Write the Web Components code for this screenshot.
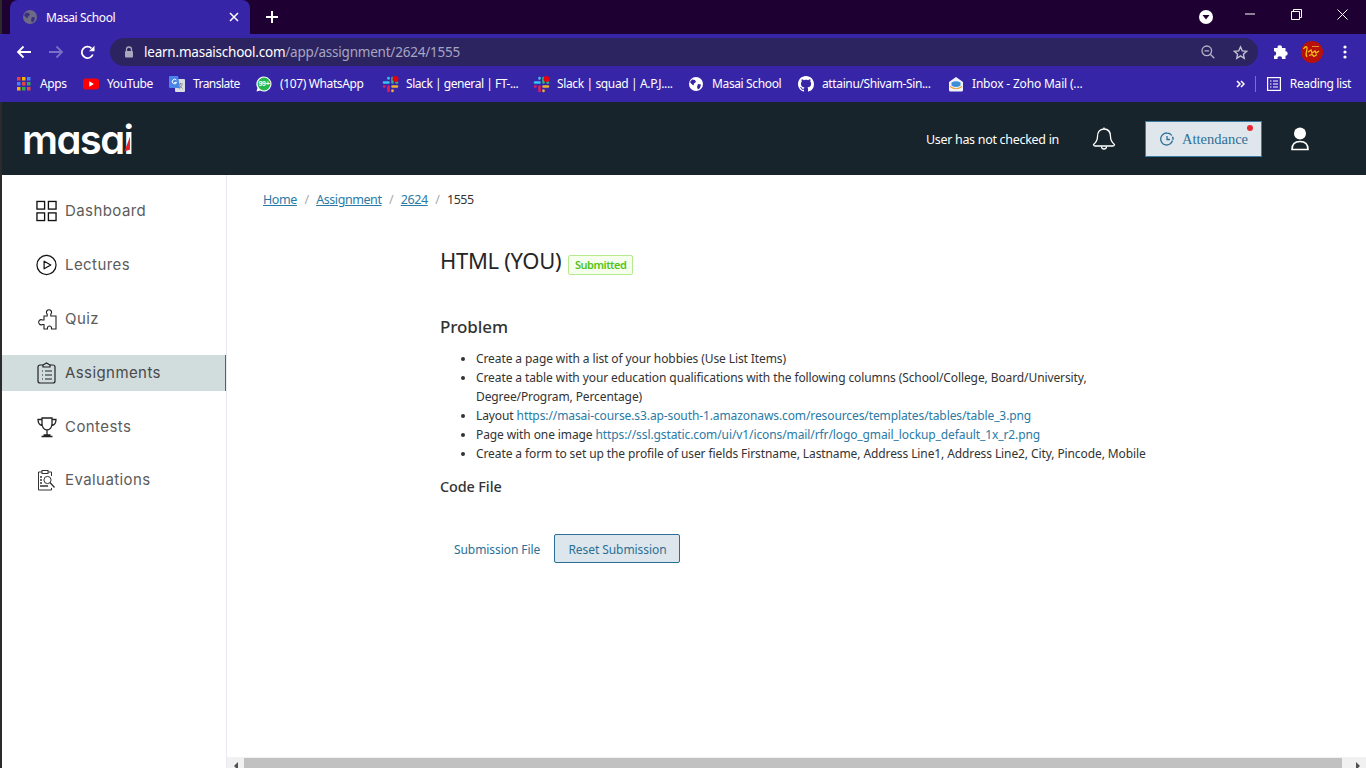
<!DOCTYPE html>
<html>
<head>
<meta charset="utf-8">
<title>Masai School</title>
<style>
  html, body { margin: 0; height: 100%; overflow: hidden; background: #fff; }
  body { font-family: "Noto Sans", "Open Sans", sans-serif; }
</style>
</head>
<body>
<browser-chrome></browser-chrome>
<app-page>
  <masai-header slot="top"></masai-header>
  <side-nav slot="side"></side-nav>
  <crumb-bar slot="main"></crumb-bar>
  <assignment-view slot="main"></assignment-view>
  <page-scrollbar slot="bottom"></page-scrollbar>
</app-page>

<script>
const UI_FONT = `"Noto Sans", "Open Sans", sans-serif`;

class BrowserChrome extends HTMLElement {
  constructor() {
    super();
    this.attachShadow({ mode: "open" });
    this.shadowRoot.innerHTML = `
      <style>
        :host { display: block; height: 102px; background: #3725a8; color: #fff; font-family: ${UI_FONT}; font-size: 12px; letter-spacing: -.37px; }
        svg { display: block; flex: none; }
        .strip { height: 34px; background: #1f0033; display: flex; align-items: stretch; border-left: 2px solid #2b2b2b; box-sizing: border-box; padding-left: 8px; }
        .tab { width: 240px; background: #3725a8; border-radius: 8px 8px 0 0; display: flex; align-items: center; padding: 0 11px 0 13px; box-sizing: border-box; }
        .tab .title { margin-left: 9px; flex: 1; }
        .newtab { margin-left: 16px; align-self: center; }
        .spacer { flex: 1; }
        .winctl { display: flex; align-items: center; }
        .bar { height: 32px; display: flex; align-items: flex-end; padding-left: 16px; box-sizing: border-box; }
        .nav { display: flex; width: 94px; height: 28px; align-items: center; gap: 16px; }
        .omni { width: 1148px; height: 28px; border-radius: 14px; background: #2c2461; display: flex; align-items: center; padding: 0 10px 0 14px; box-sizing: border-box; font-size: 13.500px; }
        .url { margin-left: 10px; flex: 1; letter-spacing: -.22px; white-space: nowrap; }
        .url span { color: #a8a5c2; }
        .omni-icons { display: flex; gap: 18px; align-items: center; }
        .tools { display: flex; height: 28px; align-items: center; margin-left: 15px; }
        .bookmarks { height: 36px; display: flex; align-items: center; padding-left: 16px; }
        .end { margin-left: auto; display: flex; align-items: center; padding-right: 15px; }
        .sep { width: 1px; height: 16px; background: #7b70c4; margin: 0 11px 0 10px; }
        .reading { margin-left: 9px; padding-bottom: 1px; }
      </style>
      <div class="strip">
        <div class="tab">
          <svg width="14" height="14" viewBox="0 0 14 14"><circle cx="7" cy="7" r="7" fill="#6d6a86"/><path d="M3 2.500l3 .5 1 2-2 1.500-.5 2-2-1.500-1.500-2zM9 7l3 .5-1 3.500-2 1.500-1-2.500z" fill="#3a3180"/></svg>
          <span class="title">Masai School</span>
          <svg width="10" height="10" viewBox="0 0 10 10"><path d="M1 1l8 8M9 1l-8 8" stroke="#fff" stroke-width="1.500"/></svg>
        </div>
        <svg class="newtab" width="12" height="12" viewBox="0 0 12 12"><path d="M6 0v12M0 6h12" stroke="#fff" stroke-width="2"/></svg>
        <div class="spacer"></div>
        <div class="winctl">
          <svg width="14" height="14" viewBox="0 0 14 14" style="margin-right:32px"><circle cx="7" cy="7" r="7" fill="#fff"/><path d="M3.500 5h7L7 9.500z" fill="#1f0033"/></svg>
          <svg width="10" height="2" viewBox="0 0 10 2" style="margin:-6px 36px 0 0"><path d="M0 1h10" stroke="#fff"/></svg>
          <svg width="11" height="11" viewBox="0 0 11 11" style="margin:-6px 35px 0 0"><path d="M.5 2.500h8v8h-8zM2.500 2.500v-2h8v8h-2" fill="none" stroke="#fff"/></svg>
          <svg width="11" height="11" viewBox="0 0 11 11" style="margin:-6px 18px 0 0"><path d="M.5.500l10 10M10.500.500l-10 10" stroke="#fff"/></svg>
        </div>
      </div>
      <div class="bar">
        <div class="nav">
          <svg width="16" height="14" viewBox="0 0 16 14"><path d="M15 7H2M7.500 1.500L2 7l5.500 5.500" fill="none" stroke="#fff" stroke-width="1.800"/></svg>
          <svg width="16" height="14" viewBox="0 0 16 14"><path d="M1 7h13M8.500 1.500L14 7l-5.500 5.500" fill="none" stroke="#7a6fc6" stroke-width="1.800"/></svg>
          <svg width="15" height="15" viewBox="0 0 15 15"><path d="M12.800 9.500A5.700 5.700 0 1 1 11.500 3.300" fill="none" stroke="#fff" stroke-width="1.800"/><path d="M9 6.200h5.500V.700z" fill="#fff"/></svg>
        </div>
        <div class="omni">
          <svg width="10" height="12" viewBox="0 0 10 12"><path d="M2.500 5V3.500a2.500 2.500 0 0 1 5 0V5" fill="none" stroke="#aaa8bc" stroke-width="1.300"/><rect x="1" y="5" width="8" height="6.500" rx="1" fill="#aaa8bc"/></svg>
          <div class="url">learn.masaischool.com<span>/app/assignment/2624/1555</span></div>
          <div class="omni-icons">
            <svg width="14" height="14" viewBox="0 0 14 14"><circle cx="5.800" cy="5.800" r="4.800" fill="none" stroke="#b3b1c4" stroke-width="1.300"/><path d="M3.500 5.800h4.600M9.300 9.300l4 4" stroke="#b3b1c4" stroke-width="1.300"/></svg>
            <svg width="15" height="15" viewBox="0 0 16 15"><path d="M8 1.500l1.900 4.200 4.600.5-3.400 3.100.9 4.500L8 11.100l-4 2.700.9-4.500L1.500 6.200l4.600-.5z" fill="none" stroke="#c4c2d2" stroke-width="1.400"/></svg>
          </div>
        </div>
        <div class="tools">
          <svg width="16" height="16" viewBox="0 0 16 16" style="margin-right:12px"><path d="M1 4h3.600a2.200 2.200 0 1 1 4.300 0h3.600v3.300a2.200 2.200 0 1 1 0 4.400V15H8.900a2.200 2.200 0 1 0-4.300 0H1v-3.300a2.200 2.200 0 1 0 0-4.400z" fill="#fff"/></svg>
          <svg width="22" height="22" viewBox="0 0 22 22" style="margin-right:20px"><circle cx="11" cy="11" r="11" fill="#b8100a"/><path d="M2.500 8c1.500-3 4-3 3.500 0s-2 5 0 8M7 11l3-2 1 3 3-2 1 2 3-2M8 14.500l3-1 2 2 3-2" fill="none" stroke="#f2c21a" stroke-width="1.300"/><path d="M11 5.500h7" stroke="#e88a30"/></svg>
          <svg width="4" height="14" viewBox="0 0 4 14"><circle cx="2" cy="2" r="1.600" fill="#fff"/><circle cx="2" cy="7" r="1.600" fill="#fff"/><circle cx="2" cy="12" r="1.600" fill="#fff"/></svg>
        </div>
      </div>
      <div class="bookmarks">
        <bookmark-item label="Apps" width="67"><svg width="14" height="14" viewBox="0 0 14 14"><rect x="0" y="0" width="3.500" height="3.500" fill="#e8453c"/><rect x="5" y="0" width="3.500" height="3.500" fill="#f4b400"/><rect x="10" y="0" width="3.500" height="3.500" fill="#4285f4"/><rect x="0" y="5" width="3.500" height="3.500" fill="#4285f4"/><rect x="5" y="5" width="3.500" height="3.500" fill="#e8453c"/><rect x="10" y="5" width="3.500" height="3.500" fill="#34a853"/><rect x="0" y="10" width="3.500" height="3.500" fill="#f4b400"/><rect x="5" y="10" width="3.500" height="3.500" fill="#34a853"/><rect x="10" y="10" width="3.500" height="3.500" fill="#e8453c"/></svg></bookmark-item>
        <bookmark-item label="YouTube" width="86"><svg width="16" height="12" viewBox="0 0 16 12"><rect width="16" height="11" y=".5" rx="3" fill="#f00"/><path d="M6.300 3.200l4.500 2.800-4.500 2.800z" fill="#fff"/></svg></bookmark-item>
        <bookmark-item label="Translate" width="87" style="letter-spacing:-.55px"><svg width="16" height="16" viewBox="0 0 16 16"><rect x="6" y="3" width="10" height="13" rx="1" fill="#d9dce3"/><path d="M9 8h5M11.500 7v1.500M10 13l3-4M10.500 9.500l3 3" stroke="#7a7f8c" stroke-width=".8" fill="none"/><path d="M1 0h8l2 12H1a1 1 0 0 1-1-1V1a1 1 0 0 1 1-1z" fill="#4a86e8"/><path d="M7.300 4a2.300 2.300 0 1 0 .4 2.500H5.300" fill="none" stroke="#fff" stroke-width="1"/></svg></bookmark-item>
        <bookmark-item label="(107) WhatsApp" width="126"><svg width="16" height="16" viewBox="0 0 16 16"><path d="M8 .500a7.500 7.500 0 1 1-3.800 14L.5 15.500l1-3.600A7.500 7.500 0 0 1 8 .500z" fill="#fff"/><circle cx="8" cy="8" r="6.400" fill="#25b84c"/><text x="8" y="10.300" font-size="7" font-weight="700" letter-spacing="-.3" fill="#fff" text-anchor="middle" font-family="Liberation Sans, sans-serif">99+</text></svg></bookmark-item>
        <bookmark-item label="Slack | general | FT-..." width="151" style="letter-spacing:-.45px"><slack-mark></slack-mark></bookmark-item>
        <bookmark-item label="Slack | squad | A.P.J...." width="155"><slack-mark></slack-mark></bookmark-item>
        <bookmark-item label="Masai School" width="110"><svg width="14" height="14" viewBox="0 0 14 14"><circle cx="7" cy="7" r="7" fill="#fff"/><path d="M3 2.500l3 .5 1 2-2 1.500-.5 2-2-1.500-1.500-2zM9 7l3 .5-1 3.500-2 1.500-1-2.500z" fill="#3725a8"/></svg></bookmark-item>
        <bookmark-item label="attainu/Shivam-Sin..." width="150"><svg width="16" height="16" viewBox="0 0 16 16"><path fill="#fff" d="M8 0C3.580 0 0 3.580 0 8c0 3.540 2.290 6.530 5.470 7.590.4.070.55-.17.55-.38 0-.19-.01-.82-.01-1.490-2.010.37-2.530-.49-2.690-.94-.09-.23-.48-.94-.82-1.130-.28-.15-.68-.52-.01-.53.630-.01 1.080.58 1.230.82.720 1.210 1.870.87 2.330.66.070-.52.280-.87.510-1.070-1.780-.2-3.640-.89-3.640-3.950 0-.87.310-1.590.820-2.150-.080-.2-.360-1.020.080-2.120 0 0 .670-.21 2.200.82.640-.18 1.320-.27 2-.27s1.360.09 2 .27c1.530-1.040 2.200-.82 2.200-.82.440 1.100.160 1.920.080 2.120.51.560.820 1.270.820 2.150 0 3.070-1.870 3.750-3.650 3.950.290.250.540.730.540 1.480 0 1.070-.010 1.930-.010 2.200 0 .210.150.460.550.380A8.010 8.010 0 0 0 16 8c0-4.420-3.580-8-8-8z"/></svg></bookmark-item>
        <bookmark-item label="Inbox - Zoho Mail (..." width="130" style="letter-spacing:-.18px"><svg width="16" height="16" viewBox="0 0 16 16"><path d="M8 1l7 5v8a1.500 1.500 0 0 1-1.500 1.500h-11A1.500 1.500 0 0 1 1 14V6z" fill="#f2f2fa"/><path d="M3.500 6.500c3-1.800 6-1.800 9 0v3c-3 2-6 2-9 0z" fill="#3f8fd8"/><path d="M2 10.500c4 3 8 3 12 0" fill="none" stroke="#e9a33c" stroke-width="1.200"/></svg></bookmark-item>
        <div class="end">
          <svg width="9" height="8" viewBox="0 0 9 8"><path d="M1 1l3 3-3 3M5 1l3 3-3 3" fill="none" stroke="#fff" stroke-width="1.500"/></svg>
          <div class="sep"></div>
          <svg width="14" height="14" viewBox="0 0 14 14"><rect x=".6" y=".6" width="12.800" height="12.800" fill="none" stroke="#fff" stroke-width="1.200"/><path d="M3 4h1.500M6 4h5M3 7h1.500M6 7h5M3 10h1.500M6 10h5" stroke="#fff" stroke-width="1.200"/></svg>
          <span class="reading">Reading list</span>
        </div>
      </div>
    `;
  }
}

class BookmarkItem extends HTMLElement {
  static get observedAttributes() { return ["label", "width"]; }

  constructor() {
    super();
    this.attachShadow({ mode: "open" });
    this.shadowRoot.innerHTML = `
      <style>
        :host { display: flex; align-items: center; box-sizing: border-box; flex: none; white-space: nowrap; }
        .icon { width: 16px; display: flex; justify-content: center; margin-right: 8px; }
        .label { padding-bottom: 1px; }
      </style>
      <div class="icon"><slot></slot></div>
      <span class="label"></span>
    `;
  }

  attributeChangedCallback() {
    this.shadowRoot.querySelector(".label").textContent = this.getAttribute("label") || "";
    this.style.width = (this.getAttribute("width") || 100) + "px";
  }
}

class SlackMark extends HTMLElement {
  constructor() {
    super();
    this.attachShadow({ mode: "open" });
    this.shadowRoot.innerHTML = `
      <style>:host { display: block; width: 17px; height: 17px; } svg { display: block; }</style>
      <svg width="17" height="17" viewBox="0 0 17 17" fill="none" stroke-width="2.600" stroke-linecap="round">
        <path d="M2 6.500h4.500M6.500 2v.5" stroke="#36c5f0"/>
        <path d="M6.500 10.500v4.500M2 10.500h.5" stroke="#e01e5a"/>
        <path d="M10.500 10.500h4.500M10.500 15v-.5" stroke="#ecb22e"/>
        <path d="M10.500 2v4.500M15 6.500h-.5" stroke="#2eb67d"/>
        <circle cx="13.500" cy="3" r="3" fill="#e3000f" stroke="none"/>
      </svg>`;
  }
}

class AppPage extends HTMLElement {
  constructor() {
    super();
    this.attachShadow({ mode: "open" });
    this.shadowRoot.innerHTML = `
      <style>
        :host { display: grid; grid-template-columns: 2px 225px 1fr; grid-template-rows: 73px 1fr 11px; height: 666px; }
        .edge { grid-row: 1 / 4; background: #2b2b2b; }
        ::slotted([slot=top]) { grid-column: 2 / 4; }
        .side { border-right: 1px solid #e8eaf4; grid-row: 2 / 4; }
        .main { min-width: 0; overflow: hidden; }
      </style>
      <div class="edge"></div>
      <slot name="top"></slot>
      <div class="side"><slot name="side"></slot></div>
      <div class="main"><slot name="main"></slot></div>
      <slot name="bottom"></slot>
    `;
  }
}

class MasaiHeader extends HTMLElement {
  constructor() {
    super();
    this.attachShadow({ mode: "open" });
    this.shadowRoot.innerHTML = `
      <style>
        :host { display: flex; align-items: center; background: #18242b; color: #fff; font-family: ${UI_FONT}; }
        svg { display: block; flex: none; }
        .logo { position: relative; margin-left: 20px; font-family: Inter, sans-serif; font-feature-settings: "cv11"; font-weight: 600; font-size: 40px; letter-spacing: -1.600px; line-height: 1; margin-top: 2px; }
        .slash { position: absolute; right: 2px; bottom: 8px; width: 6px; height: 16px; background: #e8202a; clip-path: polygon(100% 0, 100% 88%, 0 100%); }
        .status { margin-left: auto; font-size: 12.500px; letter-spacing: -.3px; padding-top: 2px; }
        .bell { margin-left: 33px; }
        .attend { position: relative; margin-left: 29px; width: 117px; height: 36px; box-sizing: border-box; background: #dfe7ed; border: 1px solid #3a7ca5; color: #2f6f96; display: flex; align-items: center; padding-left: 14px; gap: 8px; font-family: "Liberation Serif", serif; font-size: 14.500px; }
        .attend span:first-of-type { padding-top: 2px; }
        .dot { position: absolute; top: 3px; right: 8px; width: 6px; height: 6px; border-radius: 50%; background: #e8282e; }
        .user { margin: 0 57px 0 29px; }
      </style>
      <div class="logo">masai<span class="slash"></span></div>
      <span class="status">User has not checked in</span>
      <svg class="bell" width="24" height="25" viewBox="0 0 24 25" fill="none" stroke="#fff" stroke-width="1.300"><path d="M12 3c-4.500 0-6.500 3.500-6.500 7.500 0 4-1.500 6-4 8 0 1 .5 1.500 1.500 1.500h18c1 0 1.500-.5 1.500-1.500-2.500-2-4-4-4-8C18.500 6.500 16.500 3 12 3z"/><path d="M12 3V1.500M9.500 20.500a2.500 2.500 0 0 0 5 0"/></svg>
      <div class="attend">
        <svg width="14" height="14" viewBox="0 0 14 14" fill="none" stroke="#2f6f96" stroke-width="1.300"><path d="M12.500 8.500A6 6 0 1 1 7 1c2 0 3.800 1 4.800 2.500"/><path d="M7 4v3.500h3M12 5.500h1.500M12.300 7h1.500"/></svg>
        <span>Attendance</span>
        <span class="dot"></span>
      </div>
      <svg class="user" width="18" height="24" viewBox="0 0 18 24"><circle cx="9" cy="6.500" r="6" fill="#fff"/><path d="M1 22.500c0-5 3-8 8-8s8 3 8 8z" fill="none" stroke="#fff" stroke-width="1.600"/></svg>
    `;
  }
}

class NavItem extends HTMLElement {
  static get observedAttributes() { return ["label"]; }

  constructor() {
    super();
    this.attachShadow({ mode: "open" });
    this.shadowRoot.innerHTML = `
      <style>
        :host { display: flex; align-items: center; height: 36px; padding-left: 34px; box-sizing: border-box; color: #5c5c5c; font-family: Inter, sans-serif; font-size: 15px; letter-spacing: .42px; }
        :host([active]) { background: #d1dcdd; border-right: 1px solid #2a6e9e; color: #4a4a4a; }
        .icon { width: 21px; height: 22px; margin-right: 8px; flex: none; display: flex; align-items: center; justify-content: center; }
        .label { padding-bottom: 2px; }
      </style>
      <div class="icon"><slot></slot></div>
      <span class="label"></span>
    `;
  }

  attributeChangedCallback() {
    this.shadowRoot.querySelector(".label").textContent = this.getAttribute("label") || "";
  }
}

class SideNav extends HTMLElement {
  constructor() {
    super();
    this.attachShadow({ mode: "open" });
    this.shadowRoot.innerHTML = `
      <style>
        :host { display: flex; flex-direction: column; gap: 18px; padding-top: 18px; }
        nav-item:last-child { margin-top: -1px; }
      </style>
      <nav-item label="Dashboard"><svg width="22" height="22" viewBox="0 0 22 22" fill="none" stroke="#111" stroke-width="1.400"><rect x="1" y="1" width="8" height="8"/><rect x="13" y="1" width="8" height="8"/><rect x="1" y="13" width="8" height="8"/><rect x="13" y="13" width="8" height="8"/></svg></nav-item>
      <nav-item label="Lectures"><svg width="22" height="22" viewBox="0 0 22 22" fill="none" stroke="#111" stroke-width="1.300"><circle cx="11" cy="11" r="10"/><path d="M8.500 7l7 4-7 4z" stroke-linejoin="round"/></svg></nav-item>
      <nav-item label="Quiz"><svg width="20" height="21" viewBox="0 0 20 21" fill="none" stroke="#222" stroke-width="1.100"><path d="M7 7h3.200V5.200a2.600 2.600 0 1 1 3.600 0V7H19v13h-4.500v-1a2 2 0 0 0-4 0v1H7v-4.500H5.500a2.600 2.600 0 1 1 0-4.500H7z"/></svg></nav-item>
      <nav-item label="Assignments" active><svg width="19" height="22" viewBox="0 0 19 22" fill="none" stroke="#222" stroke-width="1.200"><path d="M6 3H3a2 2 0 0 0-2 2v14a2 2 0 0 0 2 2h13a2 2 0 0 0 2-2V5a2 2 0 0 0-2-2h-3"/><path d="M6 5V3l3.500-2L13 3v2z"/><path d="M5 9h1M8 9h7M5 13h1M8 13h7M5 17h1M8 17h7"/></svg></nav-item>
      <nav-item label="Contests"><svg width="20" height="21" viewBox="0 0 20 21" fill="none" stroke="#222" stroke-width="1.300"><path d="M5 1h10v6c0 3-2 6-5 6S5 10 5 7zM5 2.500H1c0 4 1.500 5.500 4.300 6M15 2.500h4c0 4-1.500 5.500-4.300 6M10 13v5M4.500 19.500h11M6.500 18h7"/></svg></nav-item>
      <nav-item label="Evaluations"><svg width="19" height="22" viewBox="0 0 19 22" fill="none" stroke="#333" stroke-width="1"><path d="M5 3H1.500v18h13v-2M11 3h3.500v4"/><rect x="5" y="1.500" width="6" height="3"/><circle cx="10.500" cy="11" r="3.600"/><path d="M13 13.500l4.500 5M3 8h2M3 11h2M3 14h2M3 17h8" stroke-width="1.300"/></svg></nav-item>
    `;
  }
}

class CrumbBar extends HTMLElement {
  constructor() {
    super();
    this.attachShadow({ mode: "open" });
    this.shadowRoot.innerHTML = `
      <style>
        :host { display: flex; align-items: center; padding: 15px 0 0 36px; height: 19px; font-family: ${UI_FONT}; font-size: 12.500px; letter-spacing: -.42px; color: #333; }
        a { color: #2a7aa5; text-decoration: underline; }
        i { font-style: normal; color: #aaa; margin: 0 7.500px; }
      </style>
      <a href="#">Home</a><i>/</i><a href="#">Assignment</a><i>/</i><a href="#">2624</a><i>/</i><span>1555</span>
    `;
  }
}

class StatusBadge extends HTMLElement {
  constructor() {
    super();
    this.attachShadow({ mode: "open" });
    this.shadowRoot.innerHTML = `
      <style>
        :host { display: inline-block; flex: none; box-sizing: border-box; width: 65px; height: 20px; line-height: 18px; text-align: center; background: #f6ffed; border: 1px solid #b7eb8f; border-radius: 2px; color: #52c41a; font-size: 11px; font-weight: 600; letter-spacing: -.5px; margin-top: 10px; }
      </style>
      <slot></slot>
    `;
  }
}

class AssignmentView extends HTMLElement {
  constructor() {
    super();
    this.attachShadow({ mode: "open" });
    this.shadowRoot.innerHTML = `
      <style>
        :host { display: block; padding: 33px 0 0 213px; font-family: ${UI_FONT}; color: #333; }
        .head { display: flex; align-items: center; gap: 7px; height: 36px; }
        h1 { margin: 0; font-size: 22px; font-weight: 400; color: #262626; letter-spacing: -.3px; }
        h2 { margin: 37px 0 0; font-size: 17px; font-weight: 500; line-height: 24px; letter-spacing: -.1px; }
        ul { margin: 10px 0 0; padding: 0 0 0 36px; width: 685px; font-size: 12px; line-height: 19px; letter-spacing: -.1px; }
        a { color: #2a7aa5; text-decoration: none; }
        h3 { margin: 14px 0 0; font-size: 14.400px; font-weight: 500; line-height: 20px; letter-spacing: -.1px; }
        .actions { display: flex; align-items: center; margin: 37px 0 0 14px; font-size: 12px; letter-spacing: -.07px; }
        .file { color: #2a7096; width: 86px; margin-right: 14px; white-space: nowrap; padding-top: 2px; }
        button { width: 126px; height: 29px; background: #dde6ec; border: 1px solid #2a6f97; border-radius: 2px; color: #2a7096; font: inherit; letter-spacing: inherit; padding: 2px 0 0 1px; }
      </style>
      <div class="head"><h1>HTML (YOU)</h1><status-badge>Submitted</status-badge></div>
      <h2>Problem</h2>
      <ul>
        <li>Create a page with a list of your hobbies (Use List Items)</li>
        <li>Create a table with your education qualifications with the following columns (School/College, Board/University, Degree/Program, Percentage)</li>
        <li>Layout <a href="#">https://masai-course.s3.ap-south-1.amazonaws.com/resources/templates/tables/table_3.png</a></li>
        <li>Page with one image <a href="#">https://ssl.gstatic.com/ui/v1/icons/mail/rfr/logo_gmail_lockup_default_1x_r2.png</a></li>
        <li>Create a form to set up the profile of user fields Firstname, Lastname, Address Line1, Address Line2, City, Pincode, Mobile</li>
      </ul>
      <h3>Code File</h3>
      <div class="actions"><span class="file">Submission File</span><button>Reset Submission</button></div>
    `;
  }
}

class PageScrollbar extends HTMLElement {
  constructor() {
    super();
    this.attachShadow({ mode: "open" });
    this.shadowRoot.innerHTML = `
      <style>
        :host { display: flex; align-items: stretch; background: #f1f1f1; grid-column: 3; padding-top: 1px; box-sizing: border-box; overflow: hidden; }
        .btn { width: 17px; display: flex; justify-content: center; flex: none; padding-top: 4px; }
        .thumb { flex: 1; background: #c1c1c1; }
        .arrow { width: 0; height: 0; border: 4px solid transparent; }
        .l { border-right-color: #505050; border-left: 0; }
        .r { border-left-color: #505050; border-right: 0; margin-left: 8px; }
      </style>
      <div class="btn"><div class="arrow l"></div></div>
      <div class="thumb"></div>
      <div class="btn" style="width:24px"><div class="arrow r"></div></div>
    `;
  }
}

customElements.define("bookmark-item", BookmarkItem);
customElements.define("slack-mark", SlackMark);
customElements.define("browser-chrome", BrowserChrome);
customElements.define("app-page", AppPage);
customElements.define("masai-header", MasaiHeader);
customElements.define("nav-item", NavItem);
customElements.define("side-nav", SideNav);
customElements.define("crumb-bar", CrumbBar);
customElements.define("status-badge", StatusBadge);
customElements.define("assignment-view", AssignmentView);
customElements.define("page-scrollbar", PageScrollbar);
</script>
</body>
</html>
